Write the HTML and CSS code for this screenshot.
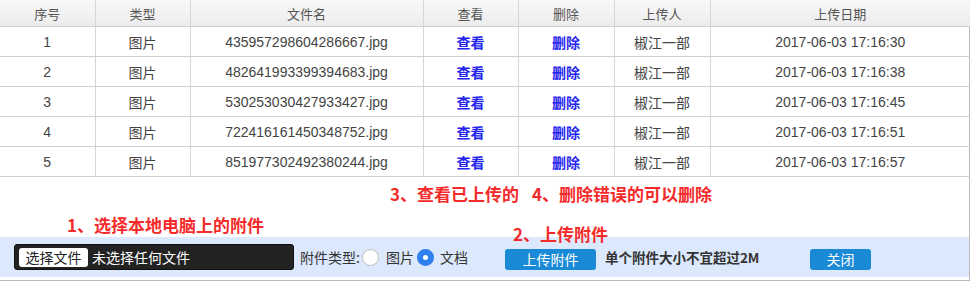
FILE: index.html
```html
<!DOCTYPE html>
<html lang="zh-CN">
<head>
  <meta charset="UTF-8">
  <link rel="stylesheet" href="styles.css">
  <title>附件上传</title>
</head>
<body>
  <div class="dialog">
    <table class="file-table">
      <colgroup>
        <col class="c-no"><col class="c-type"><col class="c-name"><col class="c-view"><col class="c-del"><col class="c-user"><col class="c-date">
      </colgroup>
      <thead>
        <tr>
          <th>序号</th>
          <th>类型</th>
          <th>文件名</th>
          <th>查看</th>
          <th>删除</th>
          <th>上传人</th>
          <th>上传日期</th>
        </tr>
      </thead>
      <tbody id="fileList"></tbody>
    </table>

    <div class="notes">
      <p class="tip tip-view">3、查看已上传的<span class="gap"></span>4、删除错误的可以删除</p>
      <div class="tip-row">
        <p class="tip tip-pick">1、选择本地电脑上的附件</p>
        <p class="tip tip-upload">2、上传附件</p>
      </div>
    </div>

    <div class="upload-bar">
      <div class="file-pick">
        <span class="pick-button">选择文件</span>
        <span class="pick-text">未选择任何文件</span>
      </div>
      <span class="label type-label">附件类型:</span>
      <span class="radio"></span>
      <span class="label pic-label">图片</span>
      <span class="radio checked"></span>
      <span class="label doc-label">文档</span>
      <button class="blue-button upload-button">上传附件</button>
      <span class="size-hint">单个附件大小不宜超过2M</span>
      <button class="blue-button close-button">关闭</button>
    </div>
  </div>

<script>
  const files = [
    ['435957298604286667.jpg', '2017-06-03 17:16:30'],
    ['482641993399394683.jpg', '2017-06-03 17:16:38'],
    ['530253030427933427.jpg', '2017-06-03 17:16:45'],
    ['722416161450348752.jpg', '2017-06-03 17:16:51'],
    ['851977302492380244.jpg', '2017-06-03 17:16:57']
  ];

  const fileList = document.getElementById('fileList');
  files.forEach((file, i) => {
    const row = fileList.insertRow();
    row.insertCell().textContent = i + 1;
    row.insertCell().textContent = '图片';
    row.insertCell().textContent = file[0];
    row.insertCell().innerHTML = '<a class="link">查看</a>';
    row.insertCell().innerHTML = '<a class="link">删除</a>';
    row.insertCell().textContent = '椒江一部';
    row.insertCell().textContent = file[1];
  });
</script>
</body>
</html>
```

FILE: styles.css
```css
body {
  margin: 0;
  background: #fff;
  font-family: "Liberation Sans", "Noto Sans CJK SC", sans-serif;
  color: #444;
}

.dialog {
  width: 969px;
  height: 280px;
  border-right: 1px solid #bbb;
  border-bottom: 1px solid #bbb;
}

.file-table {
  border-collapse: collapse;
  table-layout: fixed;
  width: 970px;
  font-size: 14px;
}

.c-no { width: 95px; }
.c-type { width: 95px; }
.c-name { width: 233px; }
.c-view { width: 95px; }
.c-del { width: 96px; }
.c-user { width: 96px; }
.c-date { width: 260px; }

.file-table th {
  height: 26px;
  padding: 0;
  font-size: 13px;
  font-weight: normal;
  color: #555;
  background: linear-gradient(#f8f8f8, #ececec);
  border-left: 1px solid #d6d6d6;
  border-bottom: 1px solid #d0d0d0;
}

.file-table td {
  height: 29px;
  padding: 0;
  text-align: center;
  border-left: 1px solid #d6d6d6;
  border-bottom: 1px solid #d0d0d0;
}

.file-table th:first-child, .file-table td:first-child {
  border-left: none;
}

.link {
  color: #2424ee;
  font-weight: bold;
}

.notes {
  height: 60px;
  font-family: "Noto Sans CJK SC", sans-serif;
}

.tip {
  margin: 0;
  color: #f52a2a;
  font-size: 17px;
  font-weight: bold;
  line-height: 20px;
}

.tip-view {
  padding: 7px 0 0 390px;
}

.gap {
  display: inline-block;
  width: 13px;
}

.tip-row {
  display: flex;
  height: 33px;
}

.tip-pick {
  box-sizing: border-box;
  flex: 0 0 513px;
  padding: 11px 0 0 67px;
}

/* sits over the top edge of the upload bar */
.tip-upload {
  position: relative;
  z-index: 1;
  padding-top: 20px;
  white-space: nowrap;
}

.upload-bar {
  height: 40px;
  background: #dce8fb;
  display: flex;
  align-items: center;
  font-family: "Noto Sans CJK SC", sans-serif;
  font-size: 14px;
  color: #333;
}

.file-pick {
  box-sizing: border-box;
  margin-left: 14px;
  width: 280px;
  height: 26px;
  background: #222;
  border-radius: 3px;
  border: 1px solid #111;
  display: flex;
  align-items: center;
}

.pick-button {
  margin-left: 4px;
  width: 69px;
  height: 19px;
  line-height: 19px;
  text-align: center;
  background: #fff;
  border-radius: 3px;
  color: #222;
}

.pick-text {
  margin-left: 4px;
  color: #fff;
}

.type-label {
  margin-left: 6px;
}

.pic-label {
  margin-left: 7px;
}

.doc-label {
  margin-left: 6px;
}

.radio {
  box-sizing: border-box;
  margin-left: 2px;
  width: 17px;
  height: 17px;
  border-radius: 50%;
  background: #fff;
  border: 1px solid #bbb;
}

.radio.checked {
  margin-left: 3px;
  background: #fff;
  border: 6px solid #2f7ff0;
}

.blue-button {
  align-self: flex-start;
  margin-top: 12px;
  border: none;
  border-radius: 3px;
  background: #1a8ad6;
  color: #fff;
  font-family: "Noto Sans CJK SC", sans-serif;
  font-size: 14px;
  height: 21px;
  line-height: 21px;
  padding: 0;
}

.upload-button {
  margin-left: 37px;
  width: 91px;
}

.size-hint {
  box-sizing: border-box;
  width: 214px;
  padding-left: 9px;
  font-weight: bold;
  font-size: 13.5px;
}

.close-button {
  width: 61px;
}
```
